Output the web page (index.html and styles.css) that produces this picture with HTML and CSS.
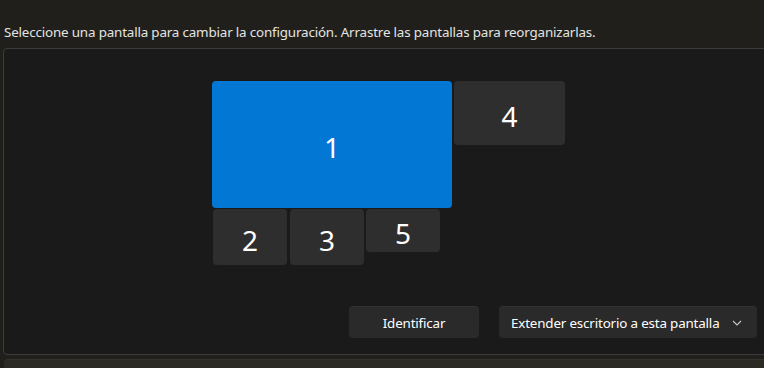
FILE: index.html
```html
<!DOCTYPE html>
<html lang="es">
<head>
    <meta charset="UTF-8">
    <title>Pantalla</title>
    <link rel="stylesheet" href="styles.css">
</head>
<body>
    <p class="hint">Seleccione una pantalla para cambiar la configuración. Arrastre las pantallas para reorganizarlas.</p>

    <!-- disposición de pantallas -->
    <div class="panel">
        <div class="canvas">
            <div class="monitor selected m1">1</div>
            <div class="monitor m4">4</div>
            <div class="monitor m2">2</div>
            <div class="monitor m3">3</div>
            <div class="monitor m5">5</div>
        </div>
        <div class="actions">
            <button class="btn identify">Identificar</button>
            <button class="btn dropdown">
                <span>Extender escritorio a esta pantalla</span>
                <svg class="chevron" width="10" height="6" viewBox="0 0 10 6"><path d="M1 1 L5 5 L9 1" fill="none" stroke="#c8c8c8" stroke-width="1.1"/></svg>
            </button>
        </div>
    </div>

    <div class="next-row"></div>
</body>
</html>
```

FILE: styles.css
```css
body {
    margin: 0;
    background-color: #201f1b;
    font-family: 'Noto Sans', 'Open Sans', sans-serif;
    color: #fff;
    overflow: hidden;
    height: 368px;
}

.hint {
    margin: 0;
    padding: 22px 0 0 4px;
    font-size: 13.4px;
    letter-spacing: -0.17px;
    line-height: 20px;
    color: #e4e4e2;
    white-space: nowrap;
}

.panel {
    margin: 6px -12px 0 3px;
    height: 305px;
    background-color: #1a1a1a;
    border: 1px solid #3c3c3a;
    border-radius: 4px;
    display: flex;
    flex-direction: column;
}

.canvas {
    position: relative;
    height: 257px;
}

.monitor {
    position: absolute;
    background-color: #2e2e2e;
    border-radius: 4px;
    display: flex;
    align-items: center;
    justify-content: center;
    padding-top: 5px;
    box-sizing: border-box;
    font-size: 28px;
    color: #fff;
}

.monitor.selected {
    background-color: #0377d4;
}

.m1 { left: 208px; top: 32px; width: 240px; height: 127px; }
.m4 { left: 450px; top: 32px; width: 111px; height: 64px; }
.m2 { left: 209px; top: 160px; width: 74px; height: 56px; }
.m3 { left: 286px; top: 160px; width: 74px; height: 56px; }
.m5 { left: 362px; top: 160px; width: 74px; height: 43px; }

.actions {
    display: flex;
    justify-content: flex-end;
    gap: 20px;
    padding-right: 18px;
}

.btn {
    height: 32px;
    background-color: #2a2a2a;
    border: none;
    border-top: 1px solid #323232;
    border-radius: 4px;
    color: #fff;
    font-family: 'Noto Sans', 'Open Sans', sans-serif;
    font-size: 13.4px;
    letter-spacing: -0.17px;
    padding: 0;
}

.identify {
    width: 130px;
}

.dropdown {
    width: 258px;
    display: flex;
    align-items: center;
    justify-content: space-between;
    padding: 0 15px 0 12px;
}

.next-row {
    margin: 4px 0 0 4px;
    height: 20px;
    background-color: #2b2a25;
    border-top: 1px solid #34332e;
    border-radius: 4px 0 0 0;
}
```
